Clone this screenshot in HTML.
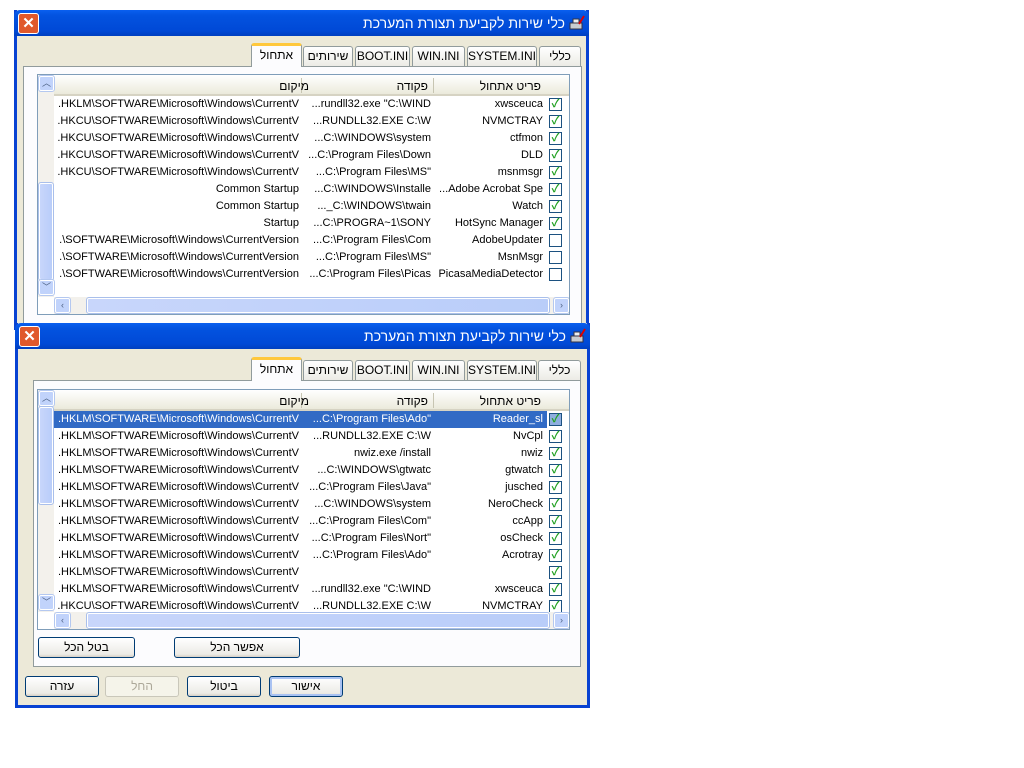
<!DOCTYPE html><html><head><meta charset="utf-8"><style>
*{margin:0;padding:0;box-sizing:border-box}
body{width:1024px;height:768px;background:#fff;position:relative;overflow:hidden;font-family:"Liberation Sans","Noto Sans CJK SC",sans-serif;font-size:11px;color:#000}
.win{position:absolute;background:#ECE9D8;border:3px solid #0842D2;border-top:none}
.tb{position:absolute;left:-3px;right:-3px;top:0;height:26px;background:linear-gradient(#0A5FEF,#0353E0 20%,#0049D6 80%,#0040C0);border-radius:6px 6px 0 0}
.tt{position:absolute;right:24px;top:5px;color:#fff;font-size:14px}
.ico{position:absolute;right:4px;top:5px;width:16px;height:16px}
.cls{position:absolute;left:4px;top:3px;width:21px;height:21px;background:#E0582B;border:1px solid #fff;border-radius:3px;color:#fff;font-size:15px;font-weight:bold;text-align:center;line-height:19px}
.tab{position:absolute;height:20px;background:linear-gradient(#fff,#ECEBE5);border:1px solid #919B9C;border-bottom:none;border-radius:3px 3px 0 0;text-align:center;line-height:19px;font-size:12px}
.tab.on{background:#FCFCFE;border-top:3px solid #FFC83C;height:24px;line-height:19px}
.panel{position:absolute;background:#FCFCFE;border:1px solid #919B9C}
.lv{position:absolute;background:#fff;border:1px solid #7F9DB9;overflow:hidden}
.hdr{position:absolute;left:16px;right:0;top:0;height:21px;background:linear-gradient(#fff,#EBEADB);border-bottom:2px solid #D6D3C3}
.hc{position:absolute;top:4px;font-size:12px}
.sep{position:absolute;top:3px;width:1px;height:15px;background:#C7C5B2}
.row{position:absolute;height:17px;left:16px;right:0;font-size:11px;line-height:17px}
.row span{position:absolute;white-space:nowrap}
.c1{right:26px}.c2{right:138px}.c3{right:270px}
.cb{position:absolute;right:7px;top:2px;width:13px;height:13px;border:1px solid #1C5180;background:#fff;color:#21A121;font-size:11px;line-height:11px;text-align:center;font-weight:bold}
.sel{background:#316AC5;color:#fff}
.vs{position:absolute;left:0;top:0;width:16px;background:#F3F1EC}
.sb{position:absolute;background:linear-gradient(90deg,#C8D6FB,#B9CDF9);border:1px solid #fff;border-radius:2px;outline:1px solid #A9BFEB}
.arr{position:absolute;width:15px;height:15px;background:#C1D3FB;border:1px solid #fff;border-radius:2px;color:#4D6185;font-size:9px;text-align:center;line-height:13px;outline:1px solid #B4C8F0}
.hs{position:absolute;height:17px;background:#F3F1EC}
.btn{position:absolute;height:21px;border:1px solid #003C74;border-radius:3px;background:linear-gradient(#fff,#ECEBE6 85%,#D6D0C5);text-align:center;line-height:19px;font-size:12px}
</style></head><body>

<!-- Window 1 -->
<div class="win" style="left:14px;top:10px;width:575px;height:320px">
 <div class="tb"><div class="cls">✕</div><svg class="ico" viewBox="0 0 16 16"><rect x="1" y="8" width="12" height="6" fill="#C8CCD0" stroke="#334"/><rect x="4" y="4" width="6" height="4" fill="#EEE" stroke="#334"/><path d="M10 9L15 1" stroke="#D00" stroke-width="2"/></svg><div class="tt">כלי שירות לקביעת תצורת המערכת</div></div>
 <div class="panel" style="left:6px;top:56px;width:559px;height:270px"></div>
 <div class="tab" style="left:522px;top:36px;width:42px">כללי</div>
 <div class="tab" style="left:450px;top:36px;width:70px">SYSTEM.INI</div>
 <div class="tab" style="left:395px;top:36px;width:53px">WIN.INI</div>
 <div class="tab" style="left:338px;top:36px;width:55px">BOOT.INI</div>
 <div class="tab" style="left:286px;top:36px;width:50px">שירותים</div>
 <div class="tab on" style="left:234px;top:33px;width:51px">אתחול</div>
 <div class="lv" style="left:20px;top:64px;width:533px;height:241px">
  <div class="hdr"><div class="sep" style="left:247px"></div><div class="sep" style="left:379px"></div>
   <span class="hc" style="right:260px">מיקום</span><span class="hc" style="right:141px">פקודה</span><span class="hc" style="right:28px">פריט אתחול</span></div>
  <div class="vs" style="height:222px"><div class="arr" style="left:1px;top:1px">︿</div><div class="sb" style="left:1px;top:108px;width:14px;height:97px"></div><div class="arr" style="left:1px;top:205px">﹀</div></div>
  <div class="row" style="top:21px"><span class="c3">.HKLM\SOFTWARE\Microsoft\Windows\CurrentV</span><span class="c2">...rundll32.exe "C:\WIND</span><span class="c1">xwsceuca</span><div class="cb">✓</div></div>
  <div class="row" style="top:38px"><span class="c3">.HKCU\SOFTWARE\Microsoft\Windows\CurrentV</span><span class="c2">...RUNDLL32.EXE C:\W</span><span class="c1">NVMCTRAY</span><div class="cb">✓</div></div>
  <div class="row" style="top:55px"><span class="c3">.HKCU\SOFTWARE\Microsoft\Windows\CurrentV</span><span class="c2">...C:\WINDOWS\system</span><span class="c1">ctfmon</span><div class="cb">✓</div></div>
  <div class="row" style="top:72px"><span class="c3">.HKCU\SOFTWARE\Microsoft\Windows\CurrentV</span><span class="c2">...C:\Program Files\Down</span><span class="c1">DLD</span><div class="cb">✓</div></div>
  <div class="row" style="top:89px"><span class="c3">.HKCU\SOFTWARE\Microsoft\Windows\CurrentV</span><span class="c2">...C:\Program Files\MS"</span><span class="c1">msnmsgr</span><div class="cb">✓</div></div>
  <div class="row" style="top:106px"><span class="c3">Common Startup</span><span class="c2">...C:\WINDOWS\Installe</span><span class="c1">...Adobe Acrobat Spe</span><div class="cb">✓</div></div>
  <div class="row" style="top:123px"><span class="c3">Common Startup</span><span class="c2">..._C:\WINDOWS\twain</span><span class="c1">Watch</span><div class="cb">✓</div></div>
  <div class="row" style="top:140px"><span class="c3">Startup</span><span class="c2">...C:\PROGRA~1\SONY</span><span class="c1">HotSync Manager</span><div class="cb">✓</div></div>
  <div class="row" style="top:157px"><span class="c3">.\SOFTWARE\Microsoft\Windows\CurrentVersion</span><span class="c2">...C:\Program Files\Com</span><span class="c1">AdobeUpdater</span><div class="cb"></div></div>
  <div class="row" style="top:174px"><span class="c3">.\SOFTWARE\Microsoft\Windows\CurrentVersion</span><span class="c2">...C:\Program Files\MS"</span><span class="c1">MsnMsgr</span><div class="cb"></div></div>
  <div class="row" style="top:191px"><span class="c3">.\SOFTWARE\Microsoft\Windows\CurrentVersion</span><span class="c2">...C:\Program Files\Picas</span><span class="c1">PicasaMediaDetector</span><div class="cb"></div></div>
  <div class="hs" style="left:16px;top:222px;width:516px"><div class="arr" style="left:1px;top:1px">‹</div><div class="sb" style="left:33px;top:1px;width:462px;height:15px"></div><div class="arr" style="right:1px;top:1px">›</div></div>
 </div>
</div>

<!-- Window 2 -->
<div class="win" style="left:15px;top:323px;width:575px;height:385px">
 <div class="tb"><div class="cls">✕</div><svg class="ico" viewBox="0 0 16 16"><rect x="1" y="8" width="12" height="6" fill="#C8CCD0" stroke="#334"/><rect x="4" y="4" width="6" height="4" fill="#EEE" stroke="#334"/><path d="M10 9L15 1" stroke="#D00" stroke-width="2"/></svg><div class="tt">כלי שירות לקביעת תצורת המערכת</div></div>
 <div class="panel" style="left:15px;top:57px;width:548px;height:287px"></div>
 <div class="tab" style="left:520px;top:37px;width:43px">כללי</div>
 <div class="tab" style="left:449px;top:37px;width:70px">SYSTEM.INI</div>
 <div class="tab" style="left:394px;top:37px;width:53px">WIN.INI</div>
 <div class="tab" style="left:337px;top:37px;width:55px">BOOT.INI</div>
 <div class="tab" style="left:285px;top:37px;width:50px">שירותים</div>
 <div class="tab on" style="left:233px;top:34px;width:51px">אתחול</div>
 <div class="lv" style="left:19px;top:66px;width:533px;height:241px">
  <div class="hdr"><div class="sep" style="left:247px"></div><div class="sep" style="left:379px"></div>
   <span class="hc" style="right:260px">מיקום</span><span class="hc" style="right:141px">פקודה</span><span class="hc" style="right:28px">פריט אתחול</span></div>
  <div class="vs" style="height:222px"><div class="arr" style="left:1px;top:1px">︿</div><div class="sb" style="left:1px;top:17px;width:14px;height:97px"></div><div class="arr" style="left:1px;top:205px">﹀</div></div>
  <div class="row sel" style="top:21px;right:22px"><span style="right:4px">Reader_sl</span><span style="right:116px">...C:\Program Files\Ado"</span><span style="right:248px">.HKLM\SOFTWARE\Microsoft\Windows\CurrentV</span></div>
  <div class="row" style="top:21px"><div class="cb" style="background:#8FAEDF">✓</div></div>
  <div class="row" style="top:38px"><span class="c3">.HKLM\SOFTWARE\Microsoft\Windows\CurrentV</span><span class="c2">...RUNDLL32.EXE C:\W</span><span class="c1">NvCpl</span><div class="cb">✓</div></div>
  <div class="row" style="top:55px"><span class="c3">.HKLM\SOFTWARE\Microsoft\Windows\CurrentV</span><span class="c2">nwiz.exe /install</span><span class="c1">nwiz</span><div class="cb">✓</div></div>
  <div class="row" style="top:72px"><span class="c3">.HKLM\SOFTWARE\Microsoft\Windows\CurrentV</span><span class="c2">...C:\WINDOWS\gtwatc</span><span class="c1">gtwatch</span><div class="cb">✓</div></div>
  <div class="row" style="top:89px"><span class="c3">.HKLM\SOFTWARE\Microsoft\Windows\CurrentV</span><span class="c2">...C:\Program Files\Java"</span><span class="c1">jusched</span><div class="cb">✓</div></div>
  <div class="row" style="top:106px"><span class="c3">.HKLM\SOFTWARE\Microsoft\Windows\CurrentV</span><span class="c2">...C:\WINDOWS\system</span><span class="c1">NeroCheck</span><div class="cb">✓</div></div>
  <div class="row" style="top:123px"><span class="c3">.HKLM\SOFTWARE\Microsoft\Windows\CurrentV</span><span class="c2">...C:\Program Files\Com"</span><span class="c1">ccApp</span><div class="cb">✓</div></div>
  <div class="row" style="top:140px"><span class="c3">.HKLM\SOFTWARE\Microsoft\Windows\CurrentV</span><span class="c2">...C:\Program Files\Nort"</span><span class="c1">osCheck</span><div class="cb">✓</div></div>
  <div class="row" style="top:157px"><span class="c3">.HKLM\SOFTWARE\Microsoft\Windows\CurrentV</span><span class="c2">...C:\Program Files\Ado"</span><span class="c1">Acrotray</span><div class="cb">✓</div></div>
  <div class="row" style="top:174px"><span class="c3">.HKLM\SOFTWARE\Microsoft\Windows\CurrentV</span><div class="cb">✓</div></div>
  <div class="row" style="top:191px"><span class="c3">.HKLM\SOFTWARE\Microsoft\Windows\CurrentV</span><span class="c2">...rundll32.exe "C:\WIND</span><span class="c1">xwsceuca</span><div class="cb">✓</div></div>
  <div class="row" style="top:208px"><span class="c3">.HKCU\SOFTWARE\Microsoft\Windows\CurrentV</span><span class="c2">...RUNDLL32.EXE C:\W</span><span class="c1">NVMCTRAY</span><div class="cb">✓</div></div>
  <div class="hs" style="left:16px;top:222px;width:516px"><div class="arr" style="left:1px;top:1px">‹</div><div class="sb" style="left:33px;top:1px;width:462px;height:15px"></div><div class="arr" style="right:1px;top:1px">›</div></div>
 </div>
 <div class="btn" style="left:20px;top:314px;width:97px">בטל הכל</div>
 <div class="btn" style="left:156px;top:314px;width:126px">אפשר הכל</div>
 <div class="btn" style="left:7px;top:353px;width:74px">עזרה</div>
 <div class="btn" style="left:87px;top:353px;width:74px;border-color:#C9C7BA;color:#ACA899;background:#F5F4EA">החל</div>
 <div class="btn" style="left:169px;top:353px;width:74px">ביטול</div>
 <div class="btn" style="left:251px;top:353px;width:74px;box-shadow:inset 0 0 0 2px #A9C2F2">אישור</div>
</div>
</body></html>
